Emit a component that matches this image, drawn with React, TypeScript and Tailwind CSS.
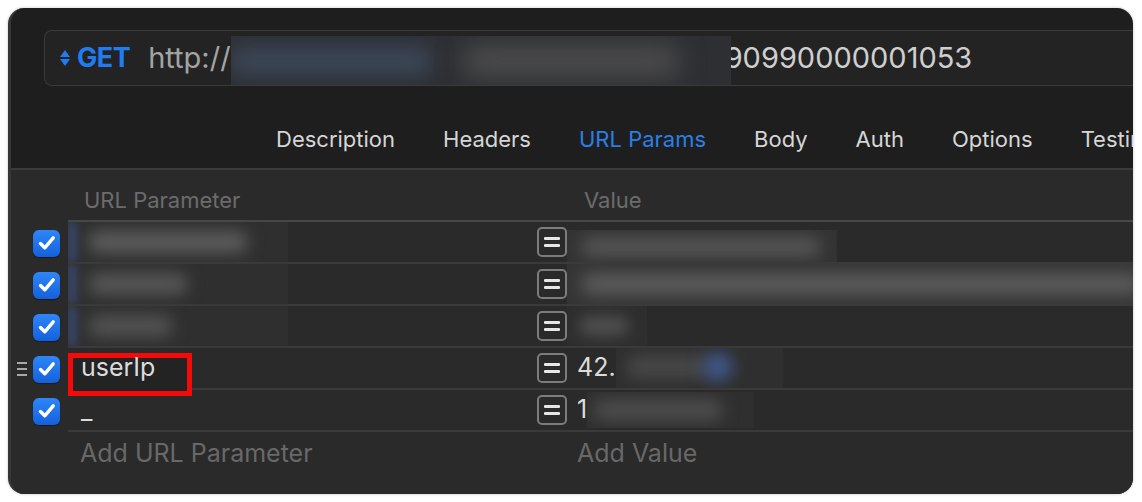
import React from "react";

const font = { fontFamily: "Inter, 'Liberation Sans', sans-serif" };

const tabs = ["Description", "Headers", "URL Params", "Body", "Auth", "Options", "Testing"];

const CheckBox = () => (
  <div className="w-[27px] h-[27px] shrink-0 rounded-[6px] bg-gradient-to-b from-[#2f86f8] to-[#1460dc] flex items-center justify-center shadow-[0_1px_1px_rgba(0,0,0,0.4)]">
    <svg width="18" height="16" viewBox="0 0 18 16">
      <path d="M2.5 8.5 L6.8 12.8 L15.2 2.8" fill="none" stroke="#fff" strokeWidth="3.4" strokeLinecap="round" strokeLinejoin="round" />
    </svg>
  </div>
);

const EqBox = () => (
  <div className="w-[30px] h-[30px] shrink-0 rounded-[5px] border-2 border-[#7c7c7c] flex flex-col items-center justify-center gap-[4px] bg-[#2a2a2a]">
    <span className="block w-[16px] h-[3px] rounded-[1px] bg-[#e6e6e6]" />
    <span className="block w-[16px] h-[3px] rounded-[1px] bg-[#e6e6e6]" />
  </div>
);

const Handle = () => (
  <div className="flex flex-col gap-[4px]">
    <span className="block w-[10px] h-[2px] bg-[#a8a8a8]" />
    <span className="block w-[10px] h-[2px] bg-[#a8a8a8]" />
    <span className="block w-[10px] h-[2px] bg-[#a8a8a8]" />
  </div>
);

type Row = {
  key: React.ReactNode;
  value: React.ReactNode;
  handle?: boolean;
};

const rows: Row[] = [
  {
    key: (
      <div className="h-full w-[220px] bg-[#2f2f2f] flex items-center overflow-hidden">
        <span className="block w-[8px] h-full shrink-0 bg-[#3c4c78] blur-[4px]" />
        <span className="block ml-[12px] w-[160px] h-[22px] shrink-0 rounded-full bg-[#5c5c5c] blur-[8px]" />
      </div>
    ),
    value: (
      <div className="h-[34px] mt-[8px] w-[270px] bg-[#333333] flex items-center overflow-hidden">
        <span className="block ml-[14px] w-[240px] h-[20px] shrink-0 rounded-full bg-[#555555] blur-[8px]" />
      </div>
    ),
  },
  {
    key: (
      <div className="h-full w-[220px] bg-[#2f2f2f] flex items-center overflow-hidden">
        <span className="block w-[8px] h-full shrink-0 bg-[#3c4c78] blur-[4px]" />
        <span className="block ml-[12px] w-[100px] h-[22px] shrink-0 rounded-full bg-[#565656] blur-[8px]" />
      </div>
    ),
    value: (
      <div className="h-full w-full bg-[#353535] flex items-center overflow-hidden">
        <span className="block ml-[14px] w-[560px] h-[22px] shrink-0 rounded-full bg-[#5a5a5a] blur-[8px]" />
      </div>
    ),
  },
  {
    key: (
      <div className="h-full w-[220px] bg-[#2f2f2f] flex items-center overflow-hidden">
        <span className="block w-[8px] h-full shrink-0 bg-[#3c4c78] blur-[4px]" />
        <span className="block ml-[12px] w-[85px] h-[22px] shrink-0 rounded-full bg-[#525252] blur-[8px]" />
      </div>
    ),
    value: (
      <div className="h-full w-[80px] bg-[#2e2e2e] flex items-center overflow-hidden">
        <span className="block ml-[12px] w-[50px] h-[20px] shrink-0 rounded-full bg-[#4e4e4e] blur-[7px]" />
      </div>
    ),
  },
  {
    handle: true,
    key: (
      <div className="relative h-full flex items-center">
        <div className="absolute left-0 top-[5px] w-[124px] h-[43px] border-[5px] border-[#f50a0a] bg-[#232323]" />
        <span className="relative pl-[13px] text-[25px] text-[#dcdcdc]">userIp</span>
      </div>
    ),
    value: (
      <div className="h-full flex items-center">
        <span className="pl-[10px] text-[25px] text-[#dcdcdc]">42.</span>
        <div className="h-[45px] -mt-[2px] w-[167px] shrink-0 bg-[#2f2f2f] flex items-center overflow-hidden">
          <span className="block ml-[10px] w-[85px] h-[24px] shrink-0 rounded-full bg-[#474747] blur-[8px]" />
          <span className="block -ml-[8px] w-[30px] h-[30px] shrink-0 rounded-full bg-[#3f5787] blur-[8px]" />
        </div>
      </div>
    ),
  },
  {
    key: <span className="pl-[13px] text-[25px] text-[#dcdcdc] leading-none">_</span>,
    value: (
      <div className="h-full flex items-center">
        <span className="pl-[10px] text-[25px] text-[#dcdcdc]">1</span>
        <div className="h-[36px] w-[167px] shrink-0 bg-[#2f2f2f] flex items-center overflow-hidden">
          <span className="block ml-[6px] w-[130px] h-[22px] shrink-0 rounded-full bg-[#4c4c4c] blur-[8px]" />
        </div>
      </div>
    ),
  },
];

export default function App() {
  return (
    <div className="w-[1142px] h-[502px] bg-white pt-2 pl-2 pr-[9px] pb-2" style={font}>
      <div className="h-full rounded-[16px] overflow-hidden bg-[#1e1e1e] flex flex-col border-l-[3px] border-[#363636] shadow-[0_0_3px_rgba(0,0,0,0.25)]">
        {/* request bar + tabs */}
        <div className="h-[160px] pt-[22px] flex flex-col">
          <div className="ml-[33px] h-[56px] rounded-l-[8px] border border-r-0 border-[#3a3a3a] bg-[#232323] flex items-center overflow-hidden whitespace-nowrap">
            <svg width="10" height="20" viewBox="0 0 10 20" className="ml-[15px] shrink-0">
              <polygon points="5,2 10,9 0,9" fill="#1f7cf2" />
              <polygon points="0,11 10,11 5,18" fill="#1f7cf2" />
            </svg>
            <span className="ml-[7px] text-[27px] font-bold text-[#1f7cf2] tracking-[-0.5px]">GET</span>
            <span className="ml-[18px] text-[29px] text-[#a3a3a3]">http://</span>
            <div className="relative z-10 self-end h-[49px] w-[500px] shrink-0 bg-[#2d2f33] flex items-center overflow-hidden">
              <span className="block w-[200px] h-[30px] shrink-0 bg-[#3b4656] blur-[10px]" />
              <span className="block ml-[30px] w-[220px] h-[34px] shrink-0 rounded-full bg-[#4a4a4a] blur-[12px]" />
            </div>
            <span className="-ml-[6px] text-[29px] text-[#cfcfcf]">90990000001053</span>
          </div>
          <div className="mt-[40px] ml-[265px] flex gap-[48px] whitespace-nowrap">
            {tabs.map((t) => (
              <span
                key={t}
                className={`text-[22px] leading-[26px] ${t === "URL Params" ? "text-[#2a7fe6]" : "text-[#d6d6d6]"}`}
              >
                {t}
              </span>
            ))}
          </div>
        </div>
        <div className="h-[2px] bg-[#3a3a3a]" />

        {/* params table */}
        <div className="flex-1 bg-[#2a2a2a] flex flex-col">
          <div className="h-[50px] flex items-end pb-[7px]">
            <span className="ml-[73px] w-[500px] text-[22px] text-[#6c6c6c] leading-[26px]">URL Parameter</span>
            <span className="text-[22px] text-[#6c6c6c] leading-[26px]">Value</span>
          </div>
          <div className="ml-[57px] h-[2px] bg-[#474747]" />

          {rows.map((r, i) => (
            <div key={i} className="flex h-[42px]">
              <div className="w-[22px] shrink-0 flex items-center justify-center">{r.handle && <Handle />}</div>
              <div className="w-[27px] shrink-0 flex items-center">
                <CheckBox />
              </div>
              <div className="w-[8px] shrink-0" />
              <div className="flex-1 min-w-0 flex border-b-[2px] border-[#3a3a3a]">
                <div className="w-[469px] shrink-0 flex items-center">{r.key}</div>
                <div className="w-[30px] shrink-0 flex items-center">
                  <EqBox />
                </div>
                <div className="flex-1 min-w-0 overflow-hidden">{r.value}</div>
              </div>
            </div>
          ))}

          <div className="flex h-[44px] items-center">
            <span className="ml-[69px] w-[497px] text-[25px] text-[#686868]">Add URL Parameter</span>
            <span className="text-[25px] text-[#686868]">Add Value</span>
          </div>
        </div>
      </div>
    </div>
  );
}
